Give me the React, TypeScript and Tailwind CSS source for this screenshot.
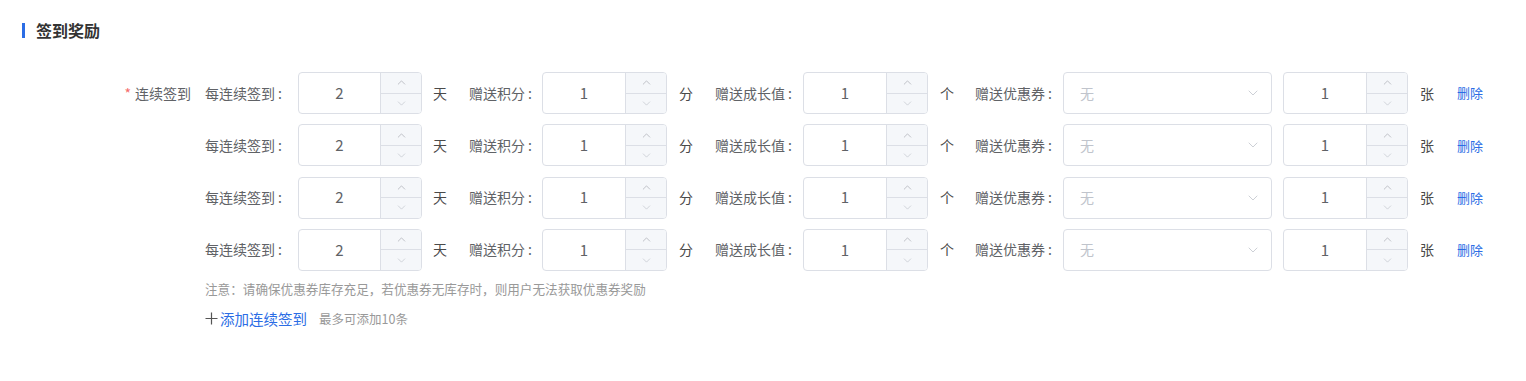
import { ChevronDown, ChevronUp } from "lucide-react";

const rows = [0, 1, 2, 3];

function NumberBox({ value, width }: { value: number; width: string }) {
  return (
    <div className={`flex h-[42px] ${width} rounded-[4px] border border-[#dcdfe6] bg-white overflow-hidden`}>
      <div className="flex-1 flex items-center justify-center text-[15px] text-[#606266]">{value}</div>
      <div className="w-[41px] flex flex-col border-l border-[#dcdfe6] bg-[#f5f7fa]">
        <div className="flex-1 flex items-center justify-center border-b border-[#dcdfe6]">
          <ChevronUp className="w-[13px] h-[13px] text-[#a8abb2]" strokeWidth={1.3} />
        </div>
        <div className="flex-1 flex items-center justify-center">
          <ChevronDown className="w-[13px] h-[13px] text-[#c0c4cc]" strokeWidth={1.3} />
        </div>
      </div>
    </div>
  );
}

function Label({ text, className }: { text: string; className: string }) {
  return (
    <span className={className}>
      {text}
      <span className="ml-[3px]">:</span>
    </span>
  );
}

function RewardRow() {
  return (
    <div className="flex items-center h-[42px] text-[14px] text-[#606266]">
      <Label text="每连续签到" className="w-[93px]" />
      <NumberBox value={2} width="w-[124px]" />
      <span className="ml-[11px] w-[14px] text-[#4a4a4a]">天</span>
      <Label text="赠送积分" className="ml-[22px] w-[73px]" />
      <NumberBox value={1} width="w-[125px]" />
      <span className="ml-[12px] w-[14px] text-[#4a4a4a]">分</span>
      <Label text="赠送成长值" className="ml-[22px] w-[88px]" />
      <NumberBox value={1} width="w-[125px]" />
      <span className="ml-[12px] w-[14px] text-[#4a4a4a]">个</span>
      <Label text="赠送优惠券" className="ml-[21px] w-[88px]" />
      <div className="flex items-center justify-between h-[42px] w-[209px] rounded-[4px] border border-[#dcdfe6] pl-[16px] pr-[10px]">
        <span className="text-[#c0c4cc]">无</span>
        <ChevronDown className="w-[16px] h-[16px] text-[#c0c4cc]" strokeWidth={1.2} />
      </div>
      <div className="ml-[11px]">
        <NumberBox value={1} width="w-[125px]" />
      </div>
      <span className="ml-[12px] w-[14px] text-[#4a4a4a]">张</span>
      <span className="ml-[23px] text-[13px] text-[#2b6de5] cursor-pointer">删除</span>
    </div>
  );
}

export default function App() {
  return (
    <div className="w-[1526px] h-[381px] bg-white font-['Noto_Sans_CJK_SC',sans-serif]">
      <div className="flex items-center pl-[22px] pt-[21px] h-[39px]">
        <div className="w-[3px] h-[15px] bg-[#2b6de5]" />
        <span className="ml-[11px] text-[16px] font-bold text-[#333] leading-none">签到奖励</span>
      </div>
      <div className="flex mt-[33px]">
        <div className="w-[205px] pr-[14px] h-[42px] flex items-center justify-end text-[14px] text-[#606266]">
          <span className="text-[#f56c6c] mr-[4px]">*</span>连续签到
        </div>
        <div className="flex flex-col">
          <div className="flex flex-col gap-[10.33px]">
            {rows.map((r) => (
              <RewardRow key={r} />
            ))}
          </div>
          <div className="mt-[9px] h-[18px] leading-[18px] text-[12.6px] text-[#999]">
            注意：请确保优惠券库存充足，若优惠券无库存时，则用户无法获取优惠券奖励
          </div>
          <div className="mt-[11px] h-[20px] flex items-center">
            <svg width="13" height="13" viewBox="0 0 13 13" className="text-[#555]">
              <path d="M6.5 0.5v12M0.5 6.5h12" stroke="currentColor" strokeWidth="1.2" fill="none" />
            </svg>
            <span className="ml-[2px] text-[14.5px] text-[#2b6de5]">添加连续签到</span>
            <span className="ml-[12px] text-[12.5px] text-[#999]">最多可添加10条</span>
          </div>
        </div>
      </div>
    </div>
  );
}
